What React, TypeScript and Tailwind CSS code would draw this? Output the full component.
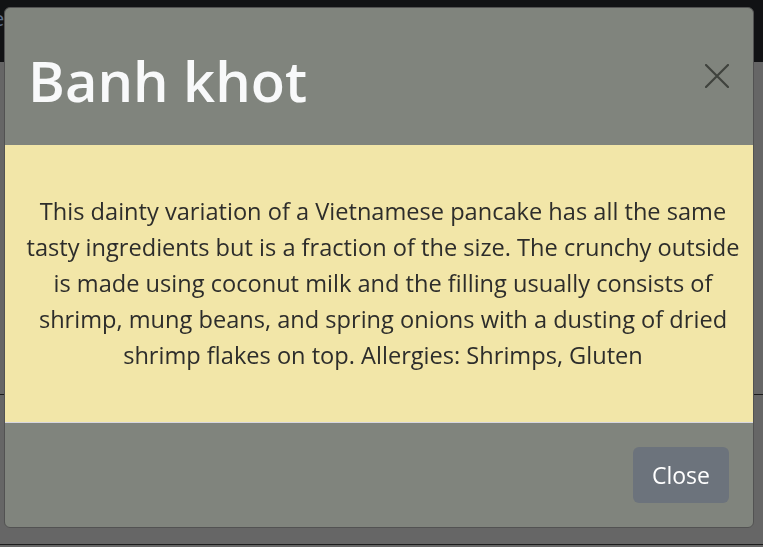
const descriptionLines = [
  "This dainty variation of a Vietnamese pancake has all the same",
  "tasty ingredients but is a fraction of the size. The crunchy outside",
  "is made using coconut milk and the filling usually consists of",
  "shrimp, mung beans, and spring onions with a dusting of dried",
  "shrimp flakes on top. Allergies: Shrimps, Gluten",
];

function CloseIcon() {
  return (
    <svg width="24" height="24" viewBox="0 0 24 24" fill="none" stroke="currentColor" strokeWidth="2.2" strokeLinecap="round">
      <path d="M1 1 L23 23 M23 1 L1 23" />
    </svg>
  );
}

export default function App() {
  return (
    <div className="relative w-[763px] h-[547px] overflow-hidden bg-[#666666] font-['Open_Sans',sans-serif]">
      {/* Page behind the backdrop */}
      <div className="h-[62px] bg-[#111214] flex items-start">
        <span className="-ml-[7px] mt-[4px] text-[20px] text-[#5d6f8c]">e</span>
      </div>
      <div className="h-[333px] border-b border-[#1c1c1c]" />
      <div className="h-[150px] border-b border-[#1c1c1c]" />

      {/* Modal */}
      <div className="fixed left-[4px] top-[7px] w-[750px] rounded-[6px] border border-[#525252] bg-[#80847d] overflow-hidden">
        <div className="h-[137px] flex items-start justify-between pl-[23px] pr-[24px]">
          <h1 className="mt-[36px] text-[56px] leading-[72px] font-semibold text-[#f8f9fa]">Banh khot</h1>
          <button className="mt-[56px] text-[#3f433d]">
            <CloseIcon />
          </button>
        </div>
        <div className="bg-[#f2e6a8] pl-[12px] pr-[4px] pt-[48px] pb-[49px] text-center text-[23.6px] leading-[36px] text-[#2d2d2b]">
          {descriptionLines.map((line) => (
            <p key={line} className="whitespace-nowrap">
              {line}
            </p>
          ))}
        </div>
        <div className="border-t border-[#d6d6e0] h-[105px] flex items-start justify-end pr-[24px] pt-[24px]">
          <button className="w-[96px] h-[56px] rounded-[6px] bg-[#6c737c] text-white text-[23px]">Close</button>
        </div>
      </div>
    </div>
  );
}
